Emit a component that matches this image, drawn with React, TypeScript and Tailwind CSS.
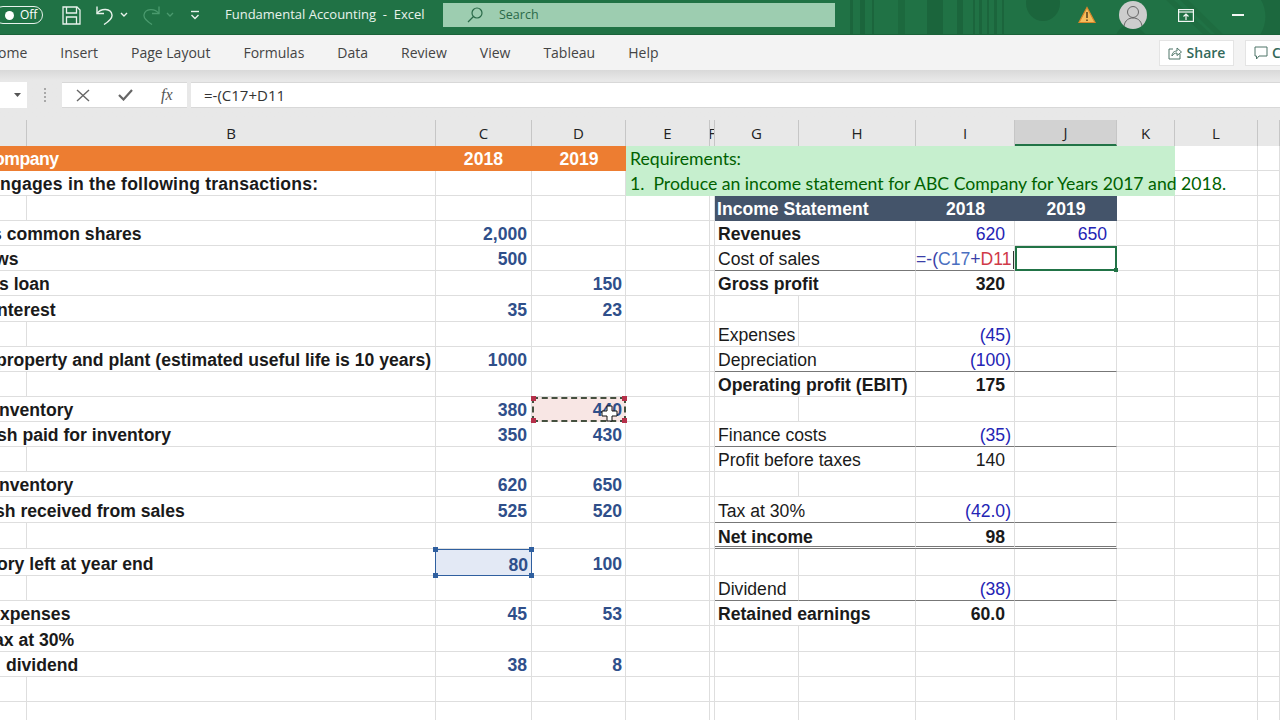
import React from "react";

const rowHeights = "grid-rows-[26px_25px_25px_25px_25px_25px_25px_26px_25px_25px_25px_25px_25px_25px_25px_26px_26px_27px_25px_25px_26px_25px_25px_25px]";

type Row = {
  label?: string;
  shift?: string;
  c?: string;
  d?: string;
  g?: string;
  gBold?: boolean;
  span?: boolean;
  i?: string;
  paren?: boolean;
  iBold?: boolean;
  iPlain?: boolean;
  j?: string;
  line?: "single" | "double";
};

const rows: Row[] = [
  {},
  { label: "ngages in the following transactions:", shift: "tracking-[0.2px]" },
  {},
  { label: "s common shares", shift: "-ml-[8px]", c: "2,000", g: "Revenues", gBold: true, span: true, i: "620", j: "650" },
  { label: "ws", shift: "-ml-[5px]", c: "500", g: "Cost of sales", span: true, line: "single" },
  { label: "s loan", shift: "-ml-[1px]", d: "150", g: "Gross profit", gBold: true, span: true, i: "320", iBold: true },
  { label: "nterest", shift: "-ml-[3px]", c: "35", d: "23" },
  { g: "Expenses", i: "(45)", paren: true },
  { label: "property and plant (estimated useful life is 10 years)", shift: "-ml-[4px]", c: "1000", g: "Depreciation", span: true, i: "(100)", paren: true, line: "single" },
  { g: "Operating profit (EBIT)", gBold: true, span: true, i: "175", iBold: true },
  { label: "nventory", shift: "-ml-[1px]", c: "380", d: "440" },
  { label: "sh paid for inventory", shift: "-ml-[3px]", c: "350", d: "430", g: "Finance costs", span: true, i: "(35)", paren: true, line: "single" },
  { g: "Profit before taxes", span: true, i: "140", iPlain: true },
  { label: "nventory", shift: "-ml-[1px]", c: "620", d: "650" },
  { label: "sh received from sales", shift: "-ml-[5px]", c: "525", d: "520", g: "Tax at 30%", span: true, i: "(42.0)", paren: true, line: "single" },
  { g: "Net income", gBold: true, span: true, i: "98", iBold: true, line: "double" },
  { label: "ory left at year end", shift: "-ml-[3px]", c: "80", d: "100" },
  { g: "Dividend", i: "(38)", paren: true, line: "single" },
  { label: "xpenses", shift: "ml-0", c: "45", d: "53", g: "Retained earnings", gBold: true, span: true, i: "60.0", iBold: true },
  { label: "ax at 30%", shift: "-ml-[6px]" },
  { label: " dividend", shift: "ml-[1px]", c: "38", d: "8" },
  {},
  {},
];

const colHeads = [
  { t: "", w: "bg-[#e8e8e8]" },
  { t: "B", w: "bg-[#e8e8e8]" },
  { t: "C", w: "bg-[#e8e8e8]" },
  { t: "D", w: "bg-[#e8e8e8]" },
  { t: "E", w: "bg-[#e8e8e8]" },
  { t: "F", w: "bg-[#e8e8e8]" },
  { t: "G", w: "bg-[#e8e8e8]" },
  { t: "H", w: "bg-[#e8e8e8]" },
  { t: "I", w: "bg-[#e8e8e8]" },
  { t: "J", w: "bg-[#d2d2d2] border-b-2 border-b-[#217346]" },
  { t: "K", w: "bg-[#e8e8e8]" },
  { t: "L", w: "bg-[#e8e8e8]" },
  { t: "", w: "bg-[#e8e8e8]" },
];

const tabs = ["Insert", "Page Layout", "Formulas", "Data", "Review", "View", "Tableau", "Help"];

const cell = "border-r border-b border-[#dedede] flex items-end pb-[1px] min-w-0 whitespace-nowrap";
const flat = "flex items-end pb-[2px]";

function Handles({ tone }: { tone: string }) {
  return (
    <>
      <span className={`absolute -left-[3px] -top-[3px] w-[5px] h-[5px] ${tone}`} />
      <span className={`absolute -right-[3px] -top-[3px] w-[5px] h-[5px] ${tone}`} />
      <span className={`absolute -left-[3px] -bottom-[3px] w-[5px] h-[5px] ${tone}`} />
      <span className={`absolute -right-[3px] -bottom-[3px] w-[5px] h-[5px] ${tone}`} />
    </>
  );
}

function TitleBar() {
  return (
    <div className="relative h-[35px] shrink-0 bg-[#207245] border-b border-[#1a6239] flex items-center pb-[4px] overflow-hidden font-['Open_Sans',sans-serif]">
      {/* background pattern of the title bar */}
      <svg className="absolute left-[836px] top-0" width="444" height="35" viewBox="0 0 444 35" fill="#1b653c">
        <rect x="14" y="0" width="3" height="35" />
        <rect x="24" y="0" width="5" height="35" />
        <rect x="36" y="0" width="2" height="35" />
        <rect x="62" y="0" width="7" height="35" opacity="0.7" />
        <rect x="91" y="0" width="16" height="35" />
        <rect x="121" y="0" width="6" height="35" />
        <rect x="137" y="0" width="2" height="35" />
        <rect x="143" y="0" width="3" height="35" />
        <rect x="151" y="0" width="2" height="35" />
        <rect x="158" y="0" width="3" height="35" />
        <rect x="166" y="0" width="2" height="35" />
        <ellipse cx="207" cy="3" rx="17" ry="18" />
        <path d="M280 35 C285 22 300 22 310 35 Z" opacity="0.7" />
        <path d="M330 0 L368 35 L376 35 L338 0 Z M344 0 L380 35 L388 35 L352 0 Z" opacity="0.5" />
        <path d="M425 0 C432 12 430 26 424 35 L444 35 L444 0 Z" opacity="0.8" />
      </svg>

      <div className="relative -ml-[6px] w-[49px] h-[18px] rounded-full border-[1.5px] border-[#e8f2ec] flex items-center gap-[6px] pl-[10px] shrink-0">
        <span className="w-[9px] h-[9px] rounded-full bg-white" />
        <span className="text-[12px] leading-none text-white">Off</span>
      </div>

      <svg className="relative ml-[19px] shrink-0" width="19" height="19" viewBox="0 0 19 19" fill="none" stroke="#e8f2ec" strokeWidth="1.3">
        <path d="M1 1 H15 L18 4 V18 H1 Z" />
        <path d="M4.5 1 V7 H14.5 V1" />
        <path d="M4.5 18 V11 H14.5 V18" />
      </svg>

      <svg className="relative ml-[14px] shrink-0" width="19" height="20" viewBox="0 0 19 20" fill="none" stroke="#e8f2ec" strokeWidth="1.4">
        <path d="M2 1.5 V8.5 H9" />
        <path d="M2 8.5 C6 3 16 3 17 10 C17.500 14 13 17 9 19.500" />
      </svg>
      <svg className="relative ml-[6px] shrink-0" width="8" height="6" viewBox="0 0 8 6" fill="none" stroke="#e8f2ec" strokeWidth="1.4">
        <path d="M1 1 L4 4 L7 1" />
      </svg>

      <svg className="relative ml-[14px] shrink-0" width="19" height="20" viewBox="0 0 19 20" fill="none" stroke="#4a9a6e" strokeWidth="1.3">
        <path d="M17 1.5 V8.5 H10" />
        <path d="M17 8.5 C13 3 3 3 2 10 C1.500 14 6 17 10 19.500" />
      </svg>
      <svg className="relative ml-[5px] shrink-0" width="8" height="6" viewBox="0 0 8 6" fill="none" stroke="#4a9a6e" strokeWidth="1.3">
        <path d="M1 1 L4 4 L7 1" />
      </svg>

      <svg className="relative ml-[16px] shrink-0" width="10" height="10" viewBox="0 0 10 10" fill="none" stroke="#e8f2ec" strokeWidth="1.4">
        <path d="M1 1.500 H9" />
        <path d="M1.500 5 L5 8.500 L8.500 5" />
      </svg>

      <span className="relative ml-[25px] w-[218px] shrink-0 text-[13px] text-[#e8f2ec] whitespace-pre">Fundamental Accounting  -  Excel</span>

      <div className="relative w-[392px] h-[24px] shrink-0 bg-[#9dcdb0] flex items-center pl-[24px] gap-[16px]">
        <svg width="16" height="16" viewBox="0 0 16 16" fill="none" stroke="#2a6a48" strokeWidth="1.2">
          <circle cx="10" cy="6" r="5" />
          <path d="M6.500 9.500 L1 15" />
        </svg>
        <span className="text-[12.5px] pt-[1px] text-[#2a6a48]">Search</span>
      </div>

      <svg className="relative ml-[243px] shrink-0" width="18" height="18" viewBox="0 0 18 18">
        <path d="M9 1.500 L17 16.500 H1 Z" fill="#f4bd5c" stroke="#d9862a" strokeWidth="1.2" />
        <path d="M9 6 V12 M9 13.500 V15" stroke="#5a4520" strokeWidth="1.6" />
      </svg>

      <div className="relative ml-[23px] w-[28px] h-[28px] rounded-full bg-[#cdcdcd] shrink-0 flex items-center justify-center">
        <svg width="22" height="24" viewBox="0 0 22 24" fill="none" stroke="#666" strokeWidth="1">
          <circle cx="11" cy="9" r="5.500" />
          <path d="M2 23 C3 17 7 15 11 15 C15 15 19 17 20 23" />
        </svg>
      </div>

      <svg className="relative ml-[31px] shrink-0" width="16" height="13" viewBox="0 0 16 13" fill="none" stroke="#f2f7f4" strokeWidth="1.2">
        <rect x="0.600" y="0.600" width="14.800" height="11.800" />
        <path d="M0.600 3 H15.400" />
        <path d="M8 11 V5.500 M5.500 7.500 L8 5 L10.500 7.500" />
      </svg>

      <span className="relative ml-[38px] w-[12px] h-[1.5px] bg-[#f2f7f4] shrink-0" />
    </div>
  );
}

function Ribbon() {
  return (
    <div className="h-[35px] shrink-0 bg-[#f3f3f3] flex items-center text-[14px] text-[#444] font-['Open_Sans',sans-serif] whitespace-nowrap">
      <span className="-ml-[2px] mr-[33px]">ome</span>
      <div className="flex gap-[33px]">
        {tabs.map((t) => (
          <span key={t}>{t}</span>
        ))}
      </div>
      <div className="ml-auto flex items-center gap-[11px]">
        <div className="w-[75px] h-[26px] bg-white border border-[#e4e4e4] flex items-center justify-center gap-[5px] text-[#33695a] font-semibold">
          <svg width="14" height="14" viewBox="0 0 14 14" fill="none" stroke="#4e7568" strokeWidth="1">
            <path d="M5 3 H1 V13 H12 V8" />
            <path d="M4 10 C4 6 7 5 9 5 V2 L13.500 6 L9 9.500 V7 C7 7 5 8 4 10 Z" />
          </svg>
          Share
        </div>
        <div className="w-[35px] h-[26px] bg-white border border-[#e4e4e4] border-r-0 flex items-center gap-[4px] pl-[8px] text-[#33695a] font-semibold overflow-hidden">
          <svg className="shrink-0" width="14" height="14" viewBox="0 0 14 14" fill="none" stroke="#4e7568" strokeWidth="1">
            <path d="M1 1 H13 V10 H5 L2.500 13 V10 H1 Z" />
          </svg>
          C
        </div>
      </div>
    </div>
  );
}

function FormulaBar() {
  return (
    <div className="h-[50px] shrink-0 bg-gradient-to-b from-[#d9d9d9] via-[#e8e8e8] via-20% to-[#e8e8e8] pt-[12px] flex items-start">
      <div className="w-[27px] h-[26px] bg-white flex items-center justify-end pr-[6px]">
        <svg width="7" height="4" viewBox="0 0 7 4" fill="#555">
          <path d="M0 0 H7 L3.500 4 Z" />
        </svg>
      </div>
      <div className="w-[35px] h-[26px] flex flex-col items-center justify-center gap-[2px]">
        <span className="w-[2px] h-[2px] bg-[#a8a8a8]" />
        <span className="w-[2px] h-[2px] bg-[#a8a8a8]" />
        <span className="w-[2px] h-[2px] bg-[#a8a8a8]" />
        <span className="w-[2px] h-[2px] bg-[#a8a8a8]" />
      </div>
      <div className="w-[125px] h-[26px] bg-white border-y border-[#d8d8d8] flex items-center pl-[14px]">
        <svg width="14" height="13" viewBox="0 0 14 13" fill="none" stroke="#666" strokeWidth="1.4">
          <path d="M1 1 L13 12 M13 1 L1 12" />
        </svg>
        <svg className="ml-[28px]" width="15" height="12" viewBox="0 0 15 12" fill="none" stroke="#666" strokeWidth="2.200">
          <path d="M1 6 L5.500 10.500 L14 1" />
        </svg>
        <span className="ml-[28px] font-['Liberation_Serif',serif] italic text-[16px] text-[#555] leading-none">fx</span>
      </div>
      <div className="ml-[4px] flex-1 h-[26px] bg-white border-y border-[#d8d8d8] flex items-center pl-[13px] pt-[1px] text-[15px] text-[#333] font-['Open_Sans',sans-serif]">
        =-(C17+D11
      </div>
    </div>
  );
}

function Sheet() {
  return (
    <div className={`relative flex-1 grid grid-cols-[27px_409px_96px_94px_84px_5px_84px_117px_99px_102px_58px_83px_22px] ${rowHeights} bg-white font-['Liberation_Sans',sans-serif] text-[17.6px] leading-[20px] text-[#1a1a1a] overflow-hidden`}>
      {/* column letters */}
      {colHeads.map((h, n) => (
        <div
          key={n}
          className={`border-r border-[#c6c6c6] flex items-center justify-center overflow-hidden text-[15px] text-[#222] font-['Open_Sans',sans-serif] ${h.w}`}
        >
          {h.t}
        </div>
      ))}

      {rows.map((r, n) => {
        const dark = r.line === "single" ? "border-b-[#777]" : r.line === "double" ? "border-b-[3px] border-double border-b-[#777] pb-0! leading-[18px]" : "";
        return (
          <React.Fragment key={n}>
            {/* left table */}
            {n === 0 ? (
              <>
                <div className={`col-span-3 bg-[#ed7d31] ${flat} justify-between text-white font-bold overflow-hidden`}>
                  <span className="-ml-[6px] tracking-[-0.5px]">ompany</span>
                  <span className="mr-[29px]">2018</span>
                </div>
                <div className={`bg-[#ed7d31] ${flat} justify-center text-white font-bold`}>2019</div>
              </>
            ) : (
              <>
                {r.label ? (
                  <div className={`col-span-2 ${cell} overflow-hidden font-bold whitespace-pre`}>
                    <span className={r.shift}>{r.label}</span>
                  </div>
                ) : (
                  <>
                    <div className={cell} />
                    <div className={cell} />
                  </>
                )}
                {n === 16 ? (
                  <div className="relative -ml-[1px] bg-[#e3e9f5] border-[1.5px] border-[#2f5f9f] flex items-end justify-end pr-[3px] font-bold text-[#2f4f8a]">
                    {r.c}
                    <Handles tone="bg-[#2f5f9f]" />
                  </div>
                ) : (
                  <div className={`${cell} justify-end pr-[4px] font-bold text-[#2f4f8a]`}>{r.c}</div>
                )}
                {n === 10 ? (
                  <div className="relative bg-[#f8e6e4] border-2 border-dashed border-[#44503f] flex items-end justify-end pr-[2px] font-bold text-[#2f4f8a]">
                    {r.d}
                    <Handles tone="bg-[#b5304a]" />
                  </div>
                ) : (
                  <div className={`${cell} justify-end pr-[3px] font-bold text-[#2f4f8a]`}>{r.d}</div>
                )}
              </>
            )}

            {/* right table */}
            {n <= 1 ? (
              <>
                <div className="col-span-7 bg-[#c6efce] flex items-end pb-[2px] pl-[4px] text-[#006100] font-['Lato',sans-serif] text-[17.65px] whitespace-pre">
                  {n === 0 ? "Requirements:" : "1.  Produce an income statement for ABC Company for Years 2017 and 2018."}
                </div>
                <div className={n === 0 ? cell : "border-r border-b border-[#dedede]"} />
                <div className={cell} />
              </>
            ) : (
              <>
                <div className={cell} />
                <div className={cell} />
                {n === 2 ? (
                  <>
                    <div className={`col-span-2 bg-[#44546a] ${flat} pl-[2px] text-white font-bold`}>Income Statement</div>
                    <div className={`bg-[#44546a] ${flat} justify-center text-white font-bold`}>2018</div>
                    <div className={`bg-[#44546a] ${flat} justify-center text-white font-bold`}>2019</div>
                  </>
                ) : (
                  <>
                    {r.span ? (
                      <div className={`col-span-2 ${cell} ${dark} pl-[3px] ${r.gBold ? "font-bold" : ""}`}>{r.g}</div>
                    ) : (
                      <>
                        <div className={`${cell} ${dark} pl-[3px] ${r.gBold ? "font-bold" : ""}`}>{r.g}</div>
                        <div className={`${cell} ${dark}`} />
                      </>
                    )}
                    {n === 4 ? (
                      <div className={`${cell} border-b-[#777] justify-end overflow-hidden text-[#3b3fa8] pr-[1px]`}>
                        =-(<span className="text-[#4a6fc0]">C17</span>+<span className="text-[#d03a48]">D11</span>
                        <span className="ml-[1px] w-[1px] h-[18px] bg-[#333]" />
                      </div>
                    ) : (
                      <div className={`${cell} ${dark} justify-end ${r.paren ? "pr-[3px]" : "pr-[9px]"} ${r.iBold ? "font-bold" : r.iPlain ? "" : "text-[#2424b4]"}`}>{r.i}</div>
                    )}
                    {n === 4 ? (
                      <div className="relative border-2 border-[#217346]">
                        <span className="absolute -right-[3px] -bottom-[3px] w-[4px] h-[4px] bg-[#217346]" />
                      </div>
                    ) : (
                      <div className={`${cell} ${dark} justify-end pr-[9px] text-[#2424b4]`}>{r.j}</div>
                    )}
                  </>
                )}
                <div className={cell} />
                <div className={cell} />
                <div className={cell} />
              </>
            )}
          </React.Fragment>
        );
      })}

      {/* mouse pointer over D11 */}
      <svg className="absolute left-[601px] top-[285px]" width="17" height="17" viewBox="0 0 17 17" fill="white" stroke="#111" strokeWidth="1">
        <path d="M6 1 H11 V6 H16 V11 H11 V16 H6 V11 H1 V6 H6 Z" />
      </svg>
    </div>
  );
}

export default function App() {
  return (
    <div className="w-[1280px] h-[720px] flex flex-col overflow-hidden bg-white">
      <TitleBar />
      <Ribbon />
      <FormulaBar />
      <Sheet />
    </div>
  );
}
